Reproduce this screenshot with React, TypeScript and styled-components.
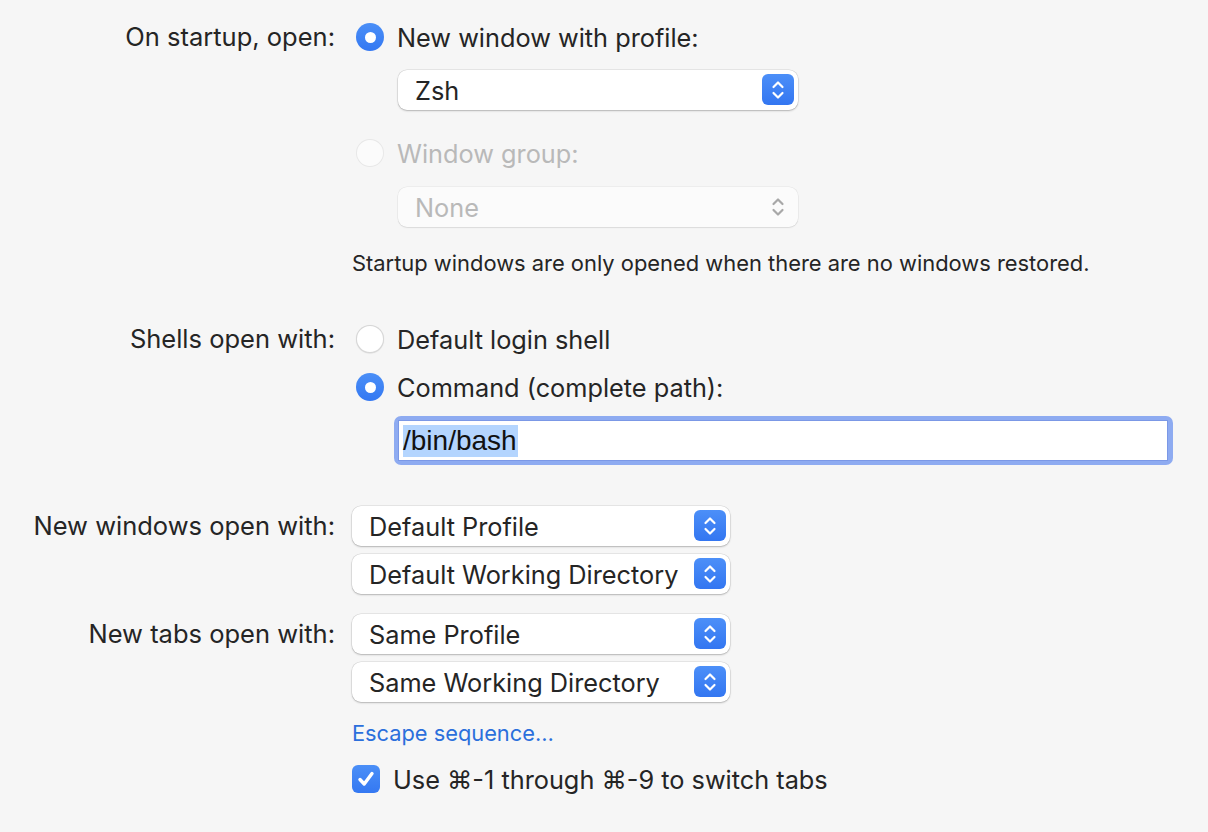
import React from "react";
import styled, { createGlobalStyle } from "styled-components";

const Global = createGlobalStyle`
  html, body { margin: 0; padding: 0; background: #f6f6f6; }
  body {
    font-family: Inter, "Noto Sans", "Liberation Sans", sans-serif;
    color: #252525;
    -webkit-font-smoothing: antialiased;
  }
`;

const Page = styled.div`
  width: 1208px;
  height: 832px;
  box-sizing: border-box;
  padding-top: 17px;
  background: #f6f6f6;
  display: flex;
  flex-direction: column;
  overflow: hidden;
`;

const Section = styled.div<{ $mt?: number }>`
  display: grid;
  grid-template-columns: 335px 1fr;
  column-gap: 17px;
  margin-top: ${(p) => p.$mt ?? 0}px;
`;

const Label = styled.div`
  text-align: right;
  font-size: 25.5px;
  line-height: 40px;
  height: 40px;
  white-space: nowrap;
`;

const Stack = styled.div`
  display: flex;
  flex-direction: column;
  align-items: flex-start;
`;

const OptionRow = styled.div<{ $mt?: number; $disabled?: boolean }>`
  display: flex;
  align-items: center;
  height: 40px;
  margin-top: ${(p) => p.$mt ?? 0}px;
  font-size: 25.3px;
  color: ${(p) => (p.$disabled ? "#b9b9b9" : "#252525")};
  white-space: nowrap;
`;

const Radio = styled.span<{ $checked?: boolean; $disabled?: boolean }>`
  box-sizing: border-box;
  width: 28px;
  height: 28px;
  border-radius: 50%;
  margin-left: 4px;
  margin-right: 13px;
  flex: none;
  display: flex;
  align-items: center;
  justify-content: center;
  background: ${(p) =>
    p.$checked ? "linear-gradient(#4b8ff7, #3478f2)" : p.$disabled ? "#fbfbfb" : "#ffffff"};
  box-shadow: ${(p) =>
    p.$checked
      ? "none"
      : p.$disabled
      ? "inset 0 0 0 1px rgba(0,0,0,0.08)"
      : "inset 0 0 0 1px rgba(0,0,0,0.16), 0 0.5px 1px rgba(0,0,0,0.12)"};
  &::after {
    content: "";
    display: ${(p) => (p.$checked ? "block" : "none")};
    width: 11px;
    height: 11px;
    border-radius: 50%;
    background: #fff;
  }
`;

const Popup = styled.div<{ $width: number; $mt?: number; $ml?: number; $disabled?: boolean }>`
  box-sizing: border-box;
  width: ${(p) => p.$width}px;
  height: 40px;
  margin-top: ${(p) => p.$mt ?? 0}px;
  margin-left: ${(p) => p.$ml ?? 0}px;
  border-radius: 9px;
  background: ${(p) => (p.$disabled ? "#fbfbfb" : "#ffffff")};
  box-shadow: ${(p) =>
    p.$disabled
      ? "0 0 0 0.5px rgba(0,0,0,0.07), 0 1px 1.5px rgba(0,0,0,0.08)"
      : "0 0 0 0.5px rgba(0,0,0,0.12), 0 1px 2px rgba(0,0,0,0.22)"};
  display: flex;
  align-items: center;
  justify-content: space-between;
  padding: 0 4px 0 17px;
  font-size: 25.3px;
  color: ${(p) => (p.$disabled ? "#b9b9b9" : "#252525")};
  white-space: nowrap;
`;

const Stepper = styled.span<{ $disabled?: boolean }>`
  width: 32px;
  height: 31px;
  margin-top: -1px;
  border-radius: 6px;
  flex: none;
  display: flex;
  align-items: center;
  justify-content: center;
  background: ${(p) => (p.$disabled ? "transparent" : "linear-gradient(#4c8ff8, #3376f1)")};
`;

const Note = styled.div<{ $mt?: number }>`
  font-size: 21.9px;
  line-height: 28px;
  margin-top: ${(p) => p.$mt ?? 0}px;
  white-space: nowrap;
  color: #252525;
`;

const FieldRing = styled.div<{ $mt?: number }>`
  box-sizing: border-box;
  margin-top: ${(p) => p.$mt ?? 0}px;
  margin-left: 42px;
  width: 779px;
  height: 49px;
  border-radius: 7px;
  background: #8eabf1;
  padding: 4px 5px 4px 4px;
  display: flex;
`;

const Field = styled.div`
  flex: 1;
  background: #fff;
  box-shadow: inset 0 0 0 1px #7b98e6;
  display: flex;
  align-items: center;
  padding-left: 5px;
  font-family: "Liberation Sans", Arial, sans-serif;
  font-size: 28px;
  color: #111;
`;

const Selected = styled.span`
  background: #b4d5fe;
  line-height: 32px;
  padding-right: 1px;
`;

const Link = styled.div<{ $mt?: number }>`
  font-size: 21.8px;
  line-height: 28px;
  margin-top: ${(p) => p.$mt ?? 0}px;
  color: #2b6fdc;
`;

const Checkbox = styled.span`
  width: 28px;
  height: 28px;
  border-radius: 6px;
  flex: none;
  margin-right: 13px;
  display: flex;
  align-items: center;
  justify-content: center;
  background: linear-gradient(#4b8ff7, #3478f2);
`;

const Chevrons = ({ color }: { color: string }) => (
  <svg width="16" height="22" viewBox="0 0 16 22" fill="none">
    <path d="M3.5 8 L8 3.5 L12.5 8" stroke={color} strokeWidth="2.2" strokeLinecap="round" strokeLinejoin="round" />
    <path d="M3.5 14 L8 18.5 L12.5 14" stroke={color} strokeWidth="2.2" strokeLinecap="round" strokeLinejoin="round" />
  </svg>
);

const Check = () => (
  <svg width="20" height="20" viewBox="0 0 20 20" fill="none">
    <path d="M4 10.5 L8.2 15 L16 4.5" stroke="#fff" strokeWidth="3.4" strokeLinecap="round" strokeLinejoin="round" />
  </svg>
);

const PopupButton = ({
  value,
  width,
  mt,
  ml,
  disabled,
}: {
  value: string;
  width: number;
  mt?: number;
  ml?: number;
  disabled?: boolean;
}) => (
  <Popup $width={width} $mt={mt} $ml={ml} $disabled={disabled}>
    <span>{value}</span>
    <Stepper $disabled={disabled}>
      <Chevrons color={disabled ? "#a8a8a8" : "#ffffff"} />
    </Stepper>
  </Popup>
);

export default function App() {
  return (
    <>
      <Global />
      <Page>
        <Section>
          <Label>On startup, open:</Label>
          <Stack>
            <OptionRow>
              <Radio $checked />
              New window with profile:
            </OptionRow>
            <PopupButton value="Zsh" width={400} mt={13} ml={46} />
            <OptionRow $mt={23} $disabled>
              <Radio $disabled />
              Window group:
            </OptionRow>
            <PopupButton value="None" width={400} mt={14} ml={46} disabled />
            <Note $mt={22}>Startup windows are only opened when there are no windows restored.</Note>
          </Stack>
        </Section>

        <Section $mt={42}>
          <Label>Shells open with:</Label>
          <Stack>
            <OptionRow>
              <Radio />
              Default login shell
            </OptionRow>
            <OptionRow $mt={8}>
              <Radio $checked />
              Command (complete path):
            </OptionRow>
            <FieldRing $mt={9}>
              <Field>
                <Selected>/bin/bash</Selected>
              </Field>
            </FieldRing>
          </Stack>
        </Section>

        <Section $mt={41}>
          <Label>New windows open with:</Label>
          <Stack>
            <PopupButton value="Default Profile" width={378} />
            <PopupButton value="Default Working Directory" width={378} mt={8} />
          </Stack>
        </Section>

        <Section $mt={20}>
          <Label>New tabs open with:</Label>
          <Stack>
            <PopupButton value="Same Profile" width={378} />
            <PopupButton value="Same Working Directory" width={378} mt={8} />
            <Link $mt={17}>Escape sequence…</Link>
            <OptionRow $mt={12}>
              <Checkbox>
                <Check />
              </Checkbox>
              Use ⌘-1 through ⌘-9 to switch tabs
            </OptionRow>
          </Stack>
        </Section>
      </Page>
    </>
  );
}
